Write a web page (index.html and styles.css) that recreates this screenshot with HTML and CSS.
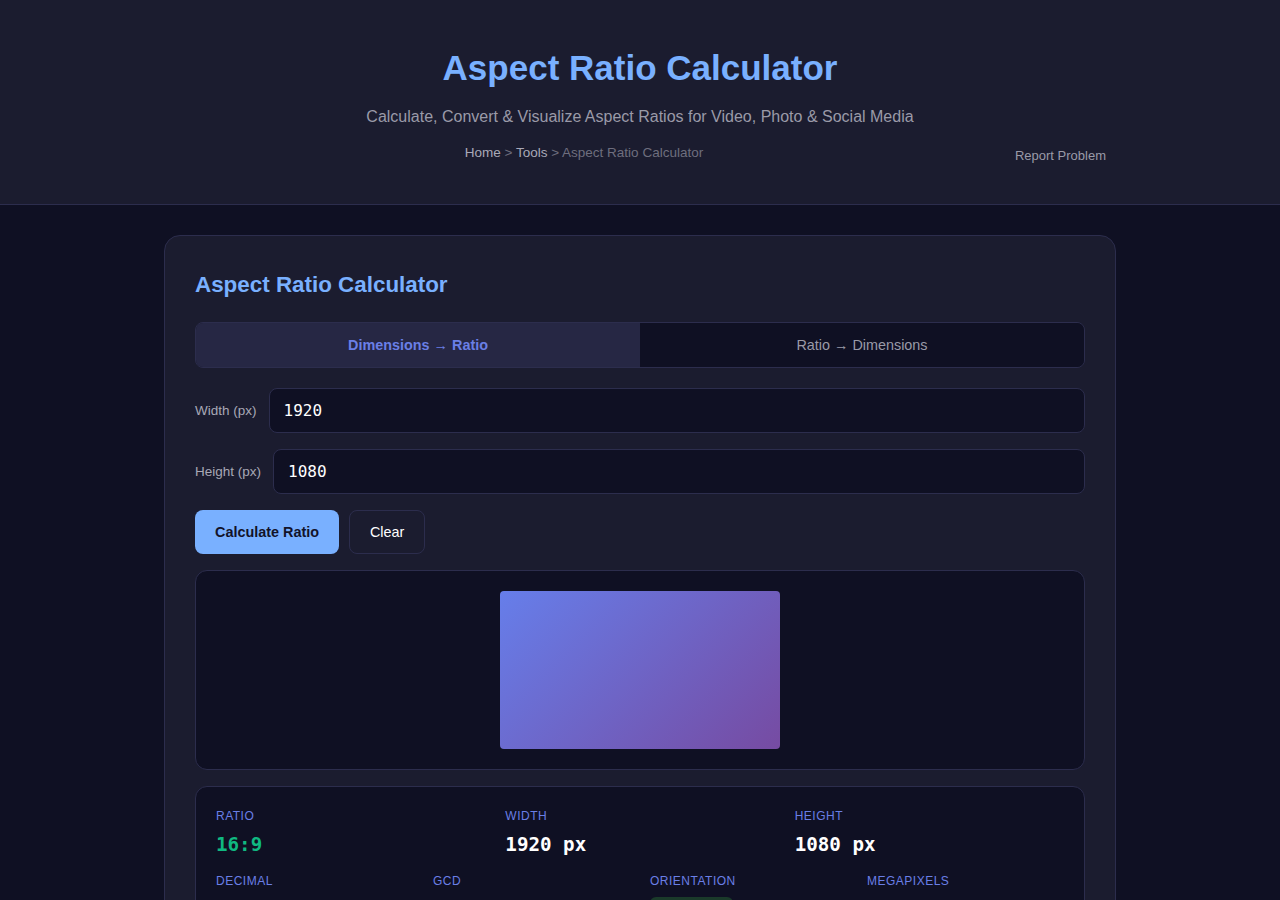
FILE: index.html
```html
<!DOCTYPE html>
<html lang="en">
<head>
    <meta charset="UTF-8">
    <meta name="viewport" content="width=device-width, initial-scale=1.0">
    <title>Aspect Ratio Calculator</title>
    <link rel="stylesheet" href="styles.css">
</head>
<body>
    <header class="site-header">
        <h1 class="site-title">Aspect Ratio Calculator</h1>
        <p class="site-subtitle">Calculate, Convert &amp; Visualize Aspect Ratios for Video, Photo &amp; Social Media</p>
        <div class="header-row">
            <nav class="breadcrumb">
                <a href="#">Home</a> &gt; <a href="#">Tools</a> &gt; <span>Aspect Ratio Calculator</span>
            </nav>
            <a href="#" class="report-link">Report Problem</a>
        </div>
    </header>

    <main class="main">
        <section class="card">
            <h2 class="card-title">Aspect Ratio Calculator</h2>

            <div class="tabs">
                <button class="tab active">Dimensions → Ratio</button>
                <button class="tab">Ratio → Dimensions</button>
            </div>

            <div class="field">
                <label for="width" class="field-label">Width (px)</label>
                <input type="text" id="width" class="field-input" value="1920">
            </div>
            <div class="field">
                <label for="height" class="field-label">Height (px)</label>
                <input type="text" id="height" class="field-input" value="1080">
            </div>

            <div class="actions">
                <button class="btn btn-primary">Calculate Ratio</button>
                <button class="btn btn-secondary">Clear</button>
            </div>

            <div class="preview">
                <div class="preview-box"></div>
            </div>

            <div class="results">
                <div class="results-row three">
                    <div class="stat">
                        <div class="stat-label">Ratio</div>
                        <div class="stat-value ratio">16:9</div>
                    </div>
                    <div class="stat">
                        <div class="stat-label">Width</div>
                        <div class="stat-value">1920 px</div>
                    </div>
                    <div class="stat">
                        <div class="stat-label">Height</div>
                        <div class="stat-value">1080 px</div>
                    </div>
                </div>
                <div class="results-row four">
                    <div class="stat">
                        <div class="stat-label">Decimal</div>
                        <div class="stat-value small">1.778</div>
                    </div>
                    <div class="stat">
                        <div class="stat-label">GCD</div>
                        <div class="stat-value small">120</div>
                    </div>
                    <div class="stat">
                        <div class="stat-label">Orientation</div>
                        <div class="badge">Landscape</div>
                    </div>
                    <div class="stat">
                        <div class="stat-label">Megapixels</div>
                        <div class="stat-value small">2.07 MP</div>
                    </div>
                </div>
            </div>
        </section>
    </main>
</body>
</html>
```

FILE: styles.css
```css
* {
    margin: 0;
    padding: 0;
    box-sizing: border-box;
}

body {
    font-family: "Liberation Sans", Arial, sans-serif;
    background: #0f1023;
    color: #e4e4f0;
    min-height: 100vh;
}

a {
    text-decoration: none;
    color: inherit;
}

/* Header */
.site-header {
    background: #1b1c2f;
    border-bottom: 1px solid #2c2d4d;
    padding: 46px 20px 42px;
    text-align: center;
}

.site-title {
    font-size: 35px;
    font-weight: 700;
    color: #79b0ff;
    line-height: 44px;
}

.site-subtitle {
    font-size: 16px;
    color: #9a9aa8;
    margin-top: 17px;
    line-height: 20px;
}

.header-row {
    max-width: 952px;
    margin: 17px auto 0;
    padding-right: 10px;
    display: flex;
    align-items: flex-end;
    gap: 11px;
}

.breadcrumb {
    flex: 1;
    text-align: center;
    font-size: 13.5px;
    color: #6e6e7e;
    line-height: 18px;
}

.breadcrumb a {
    color: #a9a9b8;
}

.report-link {
    font-size: 13px;
    color: #9a9aa8;
    line-height: 16px;
    margin-bottom: -2px;
}

/* Card */
.main {
    padding: 30px 20px;
}

.card {
    max-width: 952px;
    margin: 0 auto;
    background: #1b1c2f;
    border: 1px solid #2c2d4d;
    border-radius: 16px;
    padding: 30px;
}

.card-title {
    font-size: 22.4px;
    font-weight: 700;
    color: #79b0ff;
    line-height: 34px;
    margin-top: 2px;
    margin-bottom: 20px;
}

.tabs {
    display: flex;
    border: 1px solid #2c2d4d;
    border-radius: 8px;
    overflow: hidden;
    margin-bottom: 20px;
}

.tab {
    flex: 1;
    height: 44px;
    border: none;
    background: #0f1023;
    color: #9a9aa8;
    font-family: inherit;
    font-size: 14.4px;
    cursor: pointer;
}

.tab.active {
    background: #262744;
    color: #6a7fe6;
    font-weight: 700;
}

.field {
    display: flex;
    align-items: center;
    gap: 12px;
    margin-bottom: 16px;
}

.field-label {
    font-size: 13.5px;
    color: #a8a8b6;
}

.field-input {
    flex: 1;
    height: 45px;
    background: #0f1023;
    border: 1px solid #2c2d4d;
    border-radius: 8px;
    padding: 0 14px;
    color: #ffffff;
    font-family: "DejaVu Sans Mono", monospace;
    font-size: 16px;
    outline: none;
}

.actions {
    display: flex;
    gap: 10px;
    margin-bottom: 16px;
}

.btn {
    height: 44px;
    padding: 0 20px;
    border-radius: 8px;
    font-family: inherit;
    font-size: 14.4px;
    cursor: pointer;
}

.btn-primary {
    background: #79b0ff;
    border: none;
    color: #12132a;
    font-weight: 700;
}

.btn-secondary {
    background: transparent;
    border: 1px solid #2c2d4d;
    color: #ffffff;
}

/* Preview */
.preview {
    height: 200px;
    background: #0f1023;
    border: 1px solid #2c2d4d;
    border-radius: 12px;
    display: flex;
    justify-content: center;
    align-items: center;
    margin-bottom: 16px;
}

.preview-box {
    width: 280px;
    height: 158px;
    border-radius: 4px;
    background: linear-gradient(135deg, #667eea 0%, #764ba2 100%);
}

/* Results */
.results {
    background: #0f1023;
    border: 1px solid #2c2d4d;
    border-radius: 12px;
    padding: 20px;
}

.results-row {
    display: grid;
    gap: 20px;
}

.results-row.three {
    grid-template-columns: repeat(3, 1fr);
    margin-bottom: 14px;
}

.results-row.four {
    grid-template-columns: repeat(4, 1fr);
}

.stat-label {
    font-size: 12px;
    text-transform: uppercase;
    letter-spacing: 0.5px;
    color: #6a7fe6;
    line-height: 18px;
    margin-bottom: 7px;
}

.stat-value {
    font-family: "DejaVu Sans Mono", monospace;
    font-size: 19.2px;
    font-weight: 700;
    color: #ffffff;
    line-height: 26px;
}

.stat-value.ratio {
    color: #10b981;
}

.stat-value.small {
    font-size: 16px;
}

.badge {
    display: inline-block;
    background: #1a3a2a;
    color: #34d399;
    font-size: 12px;
    font-weight: 700;
    padding: 5px 10px;
    border-radius: 6px;
}
```
